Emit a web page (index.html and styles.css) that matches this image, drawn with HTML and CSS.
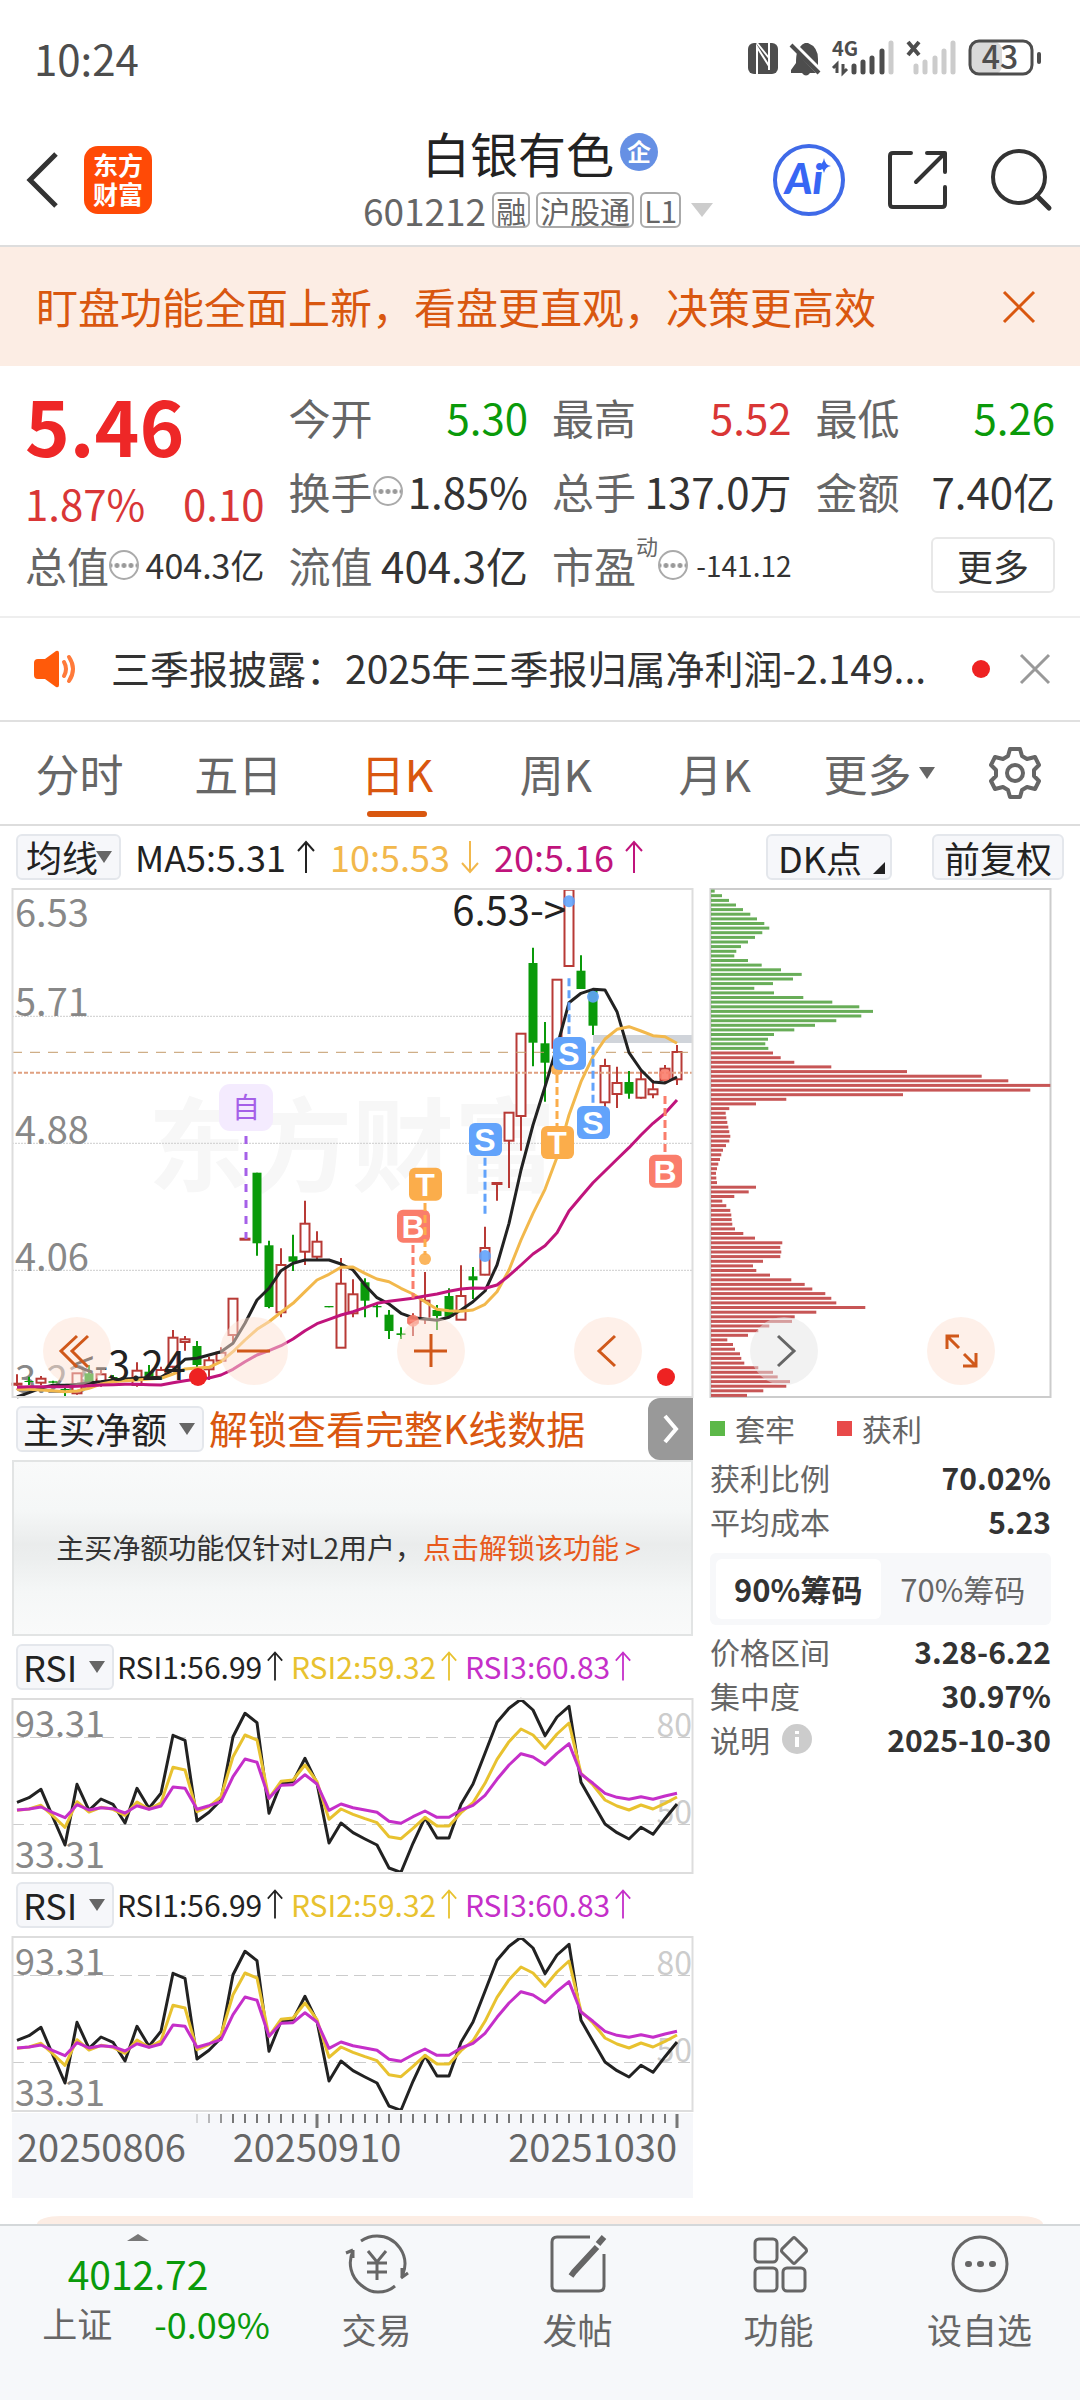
FILE: index.html
```
<!DOCTYPE html>
<html lang="zh-CN">
<head>
    <meta charset="UTF-8">
    <meta name="viewport" content="width=device-width, initial-scale=1.0">
    <title>白银有色 601212</title>
    <link rel="stylesheet" href="styles.css">
</head>
<body>
    <div class="status-bar">
        <span class="time">10:24</span>
        <svg class="status-icons" width="296" height="40" viewBox="0 0 296 40">
            <rect x="0" y="5" width="30" height="31" rx="6" fill="#4d4d4d"/>
            <path d="M9 36V9l12 19M9 5l12 15M21 5v27" fill="none" stroke="#fff" stroke-width="2"/>
            <path d="M52 9q2-3 5-4h3q10 4 10 16v6zM49 15q-1 3-1 10l-5 7v3h25z" fill="#4d4d4d"/>
            <path d="M43 7l28 28" stroke="#4d4d4d" stroke-width="4"/>
            <path d="M54 35h8q-4 5-8 0z" fill="#4d4d4d"/>
            <text x="84" y="18" class="net">4G</text>
            <path d="M89 35V26l-4 4M95 26v9l4-4" fill="none" stroke="#4d4d4d" stroke-width="3"/>
            <path d="M106 34v-6M115 34V24M124 34V20M134 34V13" stroke="#4d4d4d" stroke-width="5" stroke-linecap="round"/>
            <path d="M143 34V5M168 34v-6M177 34V24M187 34V20M196 34V13M205 34V5" stroke="#ccc" stroke-width="5" stroke-linecap="round"/>
            <path d="M160 4l11 13M171 4l-11 13" stroke="#4d4d4d" stroke-width="4"/>
            <rect x="222" y="4" width="32" height="32" rx="8" fill="#d9d9d9"/>
            <rect x="222" y="3" width="62" height="33" rx="9" fill="none" stroke="#4d4d4d" stroke-width="3"/>
            <path d="M291 16v8" stroke="#4d4d4d" stroke-width="4" stroke-linecap="round"/>
            <text x="252" y="31" text-anchor="middle" class="battery">43</text>
        </svg>
    </div>

    <header class="top">
        <div class="top-left">
            <button class="icon-btn" aria-label="返回">
                <svg width="36" height="60" viewBox="0 0 36 60"><path d="M32 4L6 30l26 26" fill="none" stroke="#333" stroke-width="5"/></svg>
            </button>
            <a class="logo" href="#">东方<br>财富</a>
        </div>
        <div class="top-title">
            <h1>白银有色<span class="ent">企</span></h1>
            <p>601212<span class="tag">融</span><span class="tag">沪股通</span><span class="tag">L1</span><i class="tri light"></i></p>
        </div>
        <div class="top-right">
            <button class="icon-btn" aria-label="AI">
                <svg width="74" height="74" viewBox="0 0 74 74">
                    <circle cx="37" cy="37" r="34" fill="#fff" stroke="#3f6ae8" stroke-width="4"/>
                    <text x="13" y="51" class="ai">Ai</text>
                    <path d="M52 15q1 7 7 8-6 1-7 7-1-6-7-7 6-1 7-8z" fill="#3766f4"/>
                </svg>
            </button>
            <button class="icon-btn" aria-label="分享">
                <svg width="62" height="62" viewBox="0 0 62 62"><path d="M24 4H6q-3 0-3 3v48q0 3 3 3h49q3 0 3-3V38M40 4h18v19M57 5L29 33" fill="none" stroke="#333" stroke-width="4" stroke-linecap="round" stroke-linejoin="round"/></svg>
            </button>
            <button class="icon-btn" aria-label="搜索">
                <svg width="62" height="62" viewBox="0 0 62 62"><circle cx="29" cy="28" r="26" fill="none" stroke="#333" stroke-width="4"/><path d="M47 47l12 12" stroke="#333" stroke-width="5" stroke-linecap="round"/></svg>
            </button>
        </div>
    </header>

    <div class="banner">
        <a href="#">盯盘功能全面上新，看盘更直观，决策更高效</a>
        <button class="icon-btn" aria-label="关闭">
            <svg width="36" height="36" viewBox="0 0 36 36"><path d="M3 3l30 30M33 3L3 33" stroke="#d9570f" stroke-width="3"/></svg>
        </button>
    </div>

    <section class="quote">
        <div class="cell tall">
            <strong class="price">5.46</strong>
            <div class="change"><span>1.87%</span><span>0.10</span></div>
        </div>
        <div class="cell"><span>今开</span><b class="down">5.30</b></div>
        <div class="cell"><span>最高</span><b class="up">5.52</b></div>
        <div class="cell"><span>最低</span><b class="down">5.26</b></div>
        <div class="cell"><span>换手<i class="more-dot"></i></span><b>1.85%</b></div>
        <div class="cell"><span>总手</span><b>137.0万</b></div>
        <div class="cell"><span>金额</span><b>7.40亿</b></div>
        <div class="cell"><span>总值<i class="more-dot"></i></span><b class="mid">404.3亿</b></div>
        <div class="cell"><span>流值</span><b>404.3亿</b></div>
        <div class="cell"><span>市盈<sup>动</sup><i class="more-dot"></i></span><b class="small">-141.12</b></div>
        <div class="cell end"><button class="more">更多</button></div>
    </section>

    <div class="news">
        <svg width="48" height="40" viewBox="0 0 48 40">
            <path d="M2 14q0-4 4-4h7L24 2q3-1 3 2v32q0 3-3 2l-11-8H6q-4 0-4-4z" fill="#ff5a0a"/>
            <path d="M32 13q4 7 0 14M37 8q8 12 0 24" fill="none" stroke="#ff7a3a" stroke-width="4" stroke-linecap="round"/>
        </svg>
        <a href="#">三季报披露：2025年三季报归属净利润-2.149...</a>
        <i class="dot"></i>
        <button class="icon-btn" aria-label="关闭">
            <svg width="32" height="32" viewBox="0 0 32 32"><path d="M2 2l28 28M30 2L2 30" stroke="#999" stroke-width="3"/></svg>
        </button>
    </div>

    <nav class="tabs">
        <button>分时</button>
        <button>五日</button>
        <button class="active">日K</button>
        <button>周K</button>
        <button>月K</button>
        <button class="drop">更多<i class="tri small"></i></button>
        <button class="gear" aria-label="设置">
            <svg width="54" height="54" viewBox="0 0 54 54" fill="none" stroke="#666" stroke-width="4" stroke-linejoin="round">
                <path d="M22 3h10l2 7 5 3 8-2 4 8-5 5v6l5 5-4 8-8-2-5 3-2 7H22l-2-7-5-3-8 2-4-8 5-5v-6l-5-5 4-8 8 2 5-3z"/>
                <circle cx="27" cy="27" r="8"/>
            </svg>
        </button>
    </nav>

    <div class="ma-bar">
        <label class="pick tight"><select aria-label="主图指标"><option>均线</option></select></label>
        <span class="val">MA5:5.31<svg class="arrow" viewBox="0 0 20 34"><path d="M10 33V2M2 11l8-9 8 9"/></svg></span>
        <span class="val yellow">10:5.53<svg class="arrow" viewBox="0 0 20 34"><path d="M10 1v31M2 23l8 9 8-9"/></svg></span>
        <span class="val pink">20:5.16<svg class="arrow" viewBox="0 0 20 34"><path d="M10 33V2M2 11l8-9 8 9"/></svg></span>
        <button class="chip dk">DK点</button>
        <button class="chip">前复权</button>
    </div>

    <main class="charts">
        <div class="left">
            <div class="plot">
                <svg id="kline" viewBox="0 0 681 510"></svg>
                <div class="controls">
                    <button aria-label="最左"><svg viewBox="0 0 68 68"><path d="M34 19L18 34l16 16M45 19L29 34l16 16"/></svg></button>
                    <button aria-label="缩小"><svg viewBox="0 0 68 68"><path d="M17 34h33"/></svg></button>
                    <button aria-label="放大"><svg viewBox="0 0 68 68"><path d="M17 34h33M34 17v33"/></svg></button>
                    <button aria-label="左移"><svg viewBox="0 0 68 68"><path d="M41 19L25 34l16 15"/></svg></button>
                </div>
            </div>

            <div class="ind-bar">
                <label class="pick"><select aria-label="副图指标一"><option>主买净额</option></select></label>
                <a class="unlock" href="#">解锁查看完整K线数据</a>
                <button class="next" aria-label="下一个"><svg width="20" height="32" viewBox="0 0 20 32"><path d="M4 3l11 13L4 29" fill="none" stroke="#fff" stroke-width="4"/></svg></button>
            </div>
            <div class="locked">主买净额功能仅针对L2用户，<a href="#">点击解锁该功能 &gt;</a></div>

            <div class="ind-bar">
                <label class="pick"><select aria-label="副图指标二"><option>RSI</option></select></label>
                <span class="rsi">RSI1:56.99<svg class="arrow" viewBox="0 0 20 34"><path d="M10 33V2M2 11l8-9 8 9"/></svg></span>
                <span class="rsi gold">RSI2:59.32<svg class="arrow" viewBox="0 0 20 34"><path d="M10 33V2M2 11l8-9 8 9"/></svg></span>
                <span class="rsi violet">RSI3:60.83<svg class="arrow" viewBox="0 0 20 34"><path d="M10 33V2M2 11l8-9 8 9"/></svg></span>
            </div>
            <svg class="rsi-chart" viewBox="0 0 681 176"></svg>

            <div class="ind-bar">
                <label class="pick"><select aria-label="副图指标三"><option>RSI</option></select></label>
                <span class="rsi">RSI1:56.99<svg class="arrow" viewBox="0 0 20 34"><path d="M10 33V2M2 11l8-9 8 9"/></svg></span>
                <span class="rsi gold">RSI2:59.32<svg class="arrow" viewBox="0 0 20 34"><path d="M10 33V2M2 11l8-9 8 9"/></svg></span>
                <span class="rsi violet">RSI3:60.83<svg class="arrow" viewBox="0 0 20 34"><path d="M10 33V2M2 11l8-9 8 9"/></svg></span>
            </div>
            <svg class="rsi-chart" viewBox="0 0 681 176"></svg>
            <svg id="dates" viewBox="0 0 681 86"></svg>
        </div>

        <aside class="right">
            <div class="plot">
                <svg id="chips" viewBox="0 0 341 510"></svg>
                <div class="controls">
                    <button class="gray" aria-label="右移"><svg viewBox="0 0 68 68"><path d="M28 19l16 15-16 15"/></svg></button>
                    <button aria-label="全屏"><svg viewBox="0 0 68 68"><path d="M32 19H20v13M21 20l11 11M36 49h13V36M48 48L37 37"/></svg></button>
                </div>
            </div>
            <p class="legend"><i class="green"></i>套牢<i class="red"></i>获利</p>
            <dl>
                <div><dt>获利比例</dt><dd>70.02%</dd></div>
                <div><dt>平均成本</dt><dd>5.23</dd></div>
            </dl>
            <div class="toggle">
                <button class="on">90%筹码</button>
                <button>70%筹码</button>
            </div>
            <dl>
                <div><dt>价格区间</dt><dd>3.28-6.22</dd></div>
                <div><dt>集中度</dt><dd>30.97%</dd></div>
                <div><dt>说明<svg class="info" width="30" height="30" viewBox="0 0 30 30"><circle cx="15" cy="15" r="15" fill="#ccc"/><path d="M15 13v10M15 7v3" stroke="#fff" stroke-width="4"/></svg></dt><dd>2025-10-30</dd></div>
            </dl>
        </aside>
    </main>

    <div class="card-top"></div>

    <nav class="bottom">
        <a class="index" href="#">
            <i class="tri up"></i>
            <b>4012.72</b>
            <span class="row"><span>上证</span><em>-0.09%</em></span>
        </a>
        <a href="#">
            <svg width="66" height="60" viewBox="0 0 66 60">
                <path d="M17 7Q24 2 33 2a28 28 0 0 1 26 38M2 19l7-3M9 17a28 28 0 0 0 8 34q8 7 17 7 10 0 17-6M9 16v8M57 44l7-5M58 34v10"/>
                <path d="M24 17l9 11 9-11M33 28v18M23 29h20M23 38h20"/>
            </svg>
            交易
        </a>
        <a href="#">
            <svg width="60" height="60" viewBox="0 0 60 60">
                <path d="M42 3H9Q4 3 4 8v44q0 5 5 5h42q5 0 5-5V20"/>
                <path d="M56 3l-6 7M49 13L26 38l-3 4" stroke-width="6"/>
            </svg>
            发帖
        </a>
        <a href="#">
            <svg width="60" height="60" viewBox="0 0 60 60">
                <rect x="6" y="5" width="22" height="23" rx="4"/>
                <rect x="6" y="34" width="22" height="23" rx="4"/>
                <rect x="34" y="34" width="22" height="23" rx="4"/>
                <path d="M44 4q1-1 2 0l11 11q1 2 0 3L46 29q-1 1-2 0L33 18q-1-1 0-3z"/>
            </svg>
            功能
        </a>
        <a href="#">
            <svg width="60" height="60" viewBox="0 0 60 60">
                <circle cx="30" cy="30" r="27"/>
                <path d="M18 30h1M30 30h1M42 30h1" stroke-width="6" stroke-linecap="round"/>
            </svg>
            设自选
        </a>
    </nav>

    <script src="script.js"></script>
</body>
</html>
```

FILE: styles.css
```
* {
    box-sizing: border-box;
}
body {
    font-family: 'Noto Sans CJK SC', sans-serif;
    background-color: #fff;
    color: #333;
    margin: 0;
    display: flex;
    flex-direction: column;
    min-height: 100vh;
    line-height: 1.2;
}
button, select {
    font: inherit;
    color: inherit;
    background: none;
    border: none;
    padding: 0;
    margin: 0;
    cursor: pointer;
}
a {
    color: inherit;
    text-decoration: none;
}
svg {
    display: block;
    overflow: visible;
}
h1, p, dl, dd {
    margin: 0;
}
i, em {
    font-style: normal;
}
.icon-btn {
    display: flex;
}
.tri {
    display: inline-block;
    border: 11px solid transparent;
    border-top: 14px solid #666;
    border-bottom: 0;
}
.tri.light {
    border-top-color: #ccc;
    margin-left: 10px;
}
.tri.small {
    border-width: 12px 8px 0;
    margin-left: 8px;
}
.tri.up {
    border: 11px solid transparent;
    border-bottom: 7px solid #777;
    border-top: 0;
}

/* status bar */
.status-bar {
    display: flex;
    justify-content: space-between;
    align-items: center;
    height: 116px;
    padding: 0 36px 0 34px;
    color: #4d4d4d;
}
.time {
    font-size: 42px;
}
.net {
    font-size: 20px;
    font-weight: bold;
    fill: #4d4d4d;
}
.battery {
    font-size: 32px;
    font-weight: 500;
    fill: #4d4d4d;
}

/* header */
.top {
    display: grid;
    grid-template-columns: 1fr auto 1fr;
    align-items: center;
    height: 131px;
    padding: 0 28px 2px 24px;
    border-bottom: 2px solid #ddd;
}
.top-left {
    display: flex;
    align-items: center;
    gap: 24px;
}
.logo {
    background-color: #ff4a06;
    color: #fff;
    width: 68px;
    height: 68px;
    border-radius: 14px;
    font-size: 25px;
    line-height: 29px;
    font-weight: bold;
    text-align: center;
    padding-top: 4px;
}
.top-title {
    text-align: center;
}
.top-title h1 {
    display: flex;
    align-items: center;
    justify-content: center;
    font-size: 48px;
    font-weight: normal;
    line-height: 60px;
    padding-left: 4px;
    color: #222;
}
.ent {
    width: 38px;
    height: 38px;
    border-radius: 50%;
    background-color: #6690e4;
    color: #fff;
    font-size: 24px;
    font-weight: bold;
    line-height: 36px;
    margin-left: 6px;
}
.top-title p {
    display: flex;
    align-items: center;
    font-size: 37px;
    line-height: 56px;
    color: #666;
}
.tag {
    border: 2px solid #aaa;
    border-radius: 6px;
    font-size: 30px;
    line-height: 32px;
    padding: 0 2px;
    margin-left: 6px;
}
.ai {
    font-family: Lato, sans-serif;
    font-size: 42px;
    font-weight: 900;
    font-style: italic;
    fill: #3766f4;
}
.top-right {
    display: flex;
    justify-content: flex-end;
    align-items: center;
    gap: 41px;
}

.banner {
    display: flex;
    justify-content: space-between;
    align-items: center;
    height: 119px;
    padding: 0 43px 0 36px;
    background-color: #fcede4;
    color: #d9570f;
    font-size: 42px;
}

/* quote */
.quote {
    display: grid;
    grid-template-columns: repeat(4, 1fr);
    grid-template-rows: 74px 74px 74px;
    column-gap: 24px;
    padding: 14px 25px;
    border-bottom: 2px solid #eee;
}
.cell {
    display: flex;
    justify-content: space-between;
    align-items: center;
    font-size: 42px;
    line-height: 70px;
    white-space: nowrap;
    color: #666;
}
.cell span {
    display: flex;
    align-items: center;
}
.cell b {
    font-weight: normal;
    color: #333;
}
.cell b.mid {
    font-size: 34px;
}
.cell b.small {
    font-size: 28px;
}
.cell b.up {
    color: #d93636;
}
.cell b.down {
    color: #0a9a0a;
}
.cell sup {
    font-size: 22px;
    line-height: 30px;
    align-self: flex-start;
}
.cell.end {
    justify-content: flex-end;
}
.tall {
    grid-row: span 2;
    flex-direction: column;
    justify-content: flex-start;
    align-items: stretch;
}
.price {
    font-size: 76px;
    line-height: 88px;
    color: #ee2727;
}
.change {
    display: flex;
    justify-content: space-between;
    color: #d93636;
}
.more-dot {
    width: 30px;
    height: 30px;
    border: 2px solid #aaa;
    border-radius: 50%;
    background: radial-gradient(circle, #999 2px, transparent 3px) center / 7px 7px repeat-x;
}
.more {
    border: 2px solid #e8e8e8;
    border-radius: 6px;
    width: 124px;
    height: 56px;
    font-size: 36px;
    line-height: 46px;
    color: #333;
}

.news {
    display: flex;
    align-items: center;
    height: 104px;
    padding: 0 29px 0 32px;
    font-size: 39px;
    line-height: 52px;
    border-bottom: 2px solid #e0e0e0;
}
.news a {
    flex: 1;
    margin: 0 0 4px 31px;
    white-space: nowrap;
}
.dot {
    width: 18px;
    height: 18px;
    border-radius: 50%;
    background-color: #ee2222;
    margin-right: 29px;
}

/* period tabs */
.tabs {
    display: flex;
    height: 104px;
    border-bottom: 2px solid #ddd;
    font-size: 44px;
    color: #666;
}
.tabs button {
    flex: 160 0 0;
    display: flex;
    align-items: center;
    justify-content: center;
    position: relative;
}
.tabs .drop {
    padding-left: 6px;
}
.tabs .gear {
    flex: 114 0 0;
    padding-right: 8px;
}
.tabs .active {
    color: #d9570f;
}
.tabs .active::after {
    content: '';
    position: absolute;
    bottom: 7px;
    width: 60px;
    height: 6px;
    border-radius: 3px;
    background-color: #d9570f;
}

/* MA row */
.ma-bar {
    display: flex;
    align-items: center;
    height: 62px;
    padding: 0 16px;
    font-size: 36px;
    color: #222;
}
.pick {
    position: relative;
    display: flex;
    align-items: center;
}
.pick select {
    appearance: none;
    height: 46px;
    padding: 0 34px 2px 5px;
    border: 2px solid #e4e7ec;
    border-radius: 6px;
    background-color: #f6f7fa;
    font-size: 36px;
    line-height: 40px;
    color: #222;
}
.pick::after {
    content: '';
    position: absolute;
    right: 9px;
    border: 8px solid transparent;
    border-top: 12px solid #666;
    border-bottom: 0;
    pointer-events: none;
}
.pick.tight select {
    padding: 0 20px 2px 8px;
}
.val {
    display: flex;
    align-items: center;
    margin-left: 14px;
}
.arrow {
    width: 20px;
    height: 34px;
    margin-left: 10px;
    fill: none;
    stroke: currentColor;
    stroke-width: 2;
}
.yellow {
    color: #f2b84c;
}
.pink {
    color: #c0147c;
}
.chip {
    position: relative;
    height: 46px;
    padding: 0 10px;
    border: 2px solid #e4e7ec;
    border-radius: 6px;
    background-color: #f6f7fa;
    line-height: 38px;
}
.chip.dk {
    margin-left: auto;
    margin-right: 40px;
    padding-right: 28px;
}
.chip.dk::after {
    content: '';
    position: absolute;
    right: 5px;
    bottom: 4px;
    border-left: 12px solid transparent;
    border-bottom: 12px solid #222;
}

/* charts */
.charts {
    display: grid;
    grid-template-columns: 681fr 341fr;
    column-gap: 17px;
    padding: 0 29px 0 12px;
    align-items: start;
}
.plot {
    position: relative;
}
.plot > svg, .rsi-chart, #dates {
    width: 100%;
}
.axis {
    font-size: 38px;
    fill: #888;
}
.rsi-chart .axis {
    font-size: 36px;
}
.rsi-chart .faint {
    font-size: 32px;
    fill: #ccc;
}
#dates .axis {
    fill: #666;
}
.note {
    font-size: 40px;
    fill: #222;
}
.watermark {
    font-size: 102px;
    font-weight: bold;
    fill: #f7f7f7;
}
.badge {
    font-family: 'Liberation Sans', sans-serif;
    font-size: 32px;
    font-weight: bold;
    fill: #fff;
}
.self {
    font-size: 28px;
    fill: #a560e8;
}
.controls {
    position: absolute;
    left: 0;
    bottom: 13px;
    display: flex;
    gap: 109px;
    padding-left: 31px;
}
.right .controls {
    padding-left: 40px;
}
.controls button {
    width: 68px;
    height: 68px;
    border-radius: 50%;
    background-color: rgba(253, 226, 212, 0.5);
    color: #d0581a;
}
.controls .gray {
    background-color: rgba(230, 230, 230, 0.5);
    color: #666;
}
.controls path {
    fill: none;
    stroke: currentColor;
    stroke-width: 3;
}
.ind-bar {
    display: flex;
    align-items: center;
    height: 62px;
    padding-left: 4px;
}
.unlock {
    font-size: 39px;
    line-height: 52px;
    padding-bottom: 4px;
    color: #d9570f;
    margin-left: 5px;
}
.next {
    display: flex;
    align-items: center;
    justify-content: center;
    width: 45px;
    height: 62px;
    margin-left: auto;
    border-radius: 12px 0 0 12px;
    background-color: #999;
}
.locked {
    display: flex;
    align-items: center;
    justify-content: center;
    height: 176px;
    padding-right: 8px;
    border: 2px solid #e2e4e4;
    background: linear-gradient(#f9fafa, #f5f7f7 28%, #eaecec 48%, #eceeee 56%, #f5f7f7 76%, #f9fafa);
    font-size: 28px;
}
.locked a {
    color: #e85a1c;
}
.rsi {
    display: flex;
    align-items: center;
    width: 171px;
    margin-left: 3px;
    padding-bottom: 2px;
    font-size: 30px;
    color: #222;
}
.rsi .arrow {
    width: 18px;
    margin-left: 4px;
}
.gold {
    color: #e8c22f;
}
.violet {
    color: #c52fc9;
}

/* chip distribution */
.legend {
    display: flex;
    align-items: center;
    height: 60px;
    font-size: 30px;
    color: #666;
}
.legend i {
    width: 15px;
    height: 15px;
    margin-right: 10px;
}
.legend .green {
    background-color: #5cb848;
}
.legend .red {
    background-color: #e84a4a;
    margin-left: 42px;
}
.right dl div {
    display: flex;
    justify-content: space-between;
    align-items: center;
    height: 44px;
    font-size: 30px;
    line-height: 40px;
    padding-bottom: 6px;
}
.right dl dt {
    display: flex;
    align-items: center;
    color: #666;
}
.right dl dd {
    font-weight: bold;
}
.info {
    margin-left: 12px;
}
.toggle {
    display: grid;
    grid-template-columns: 1fr 1fr;
    height: 72px;
    margin: 7px 0;
    padding: 6px;
    border-radius: 6px;
    background-color: #f7f8fa;
    font-size: 31px;
    line-height: 54px;
    color: #666;
}
.toggle .on {
    border-radius: 6px;
    background-color: #fff;
    color: #333;
    font-weight: bold;
}

/* bottom */
.card-top {
    height: 8px;
    margin: 18px 37px 0;
    border-radius: 24px 24px 0 0 / 8px 8px 0 0;
    background-color: #fcede4;
}
.bottom {
    flex: 1;
    display: grid;
    grid-template-columns: 276fr 201fr 201fr 201fr 201fr;
    border-top: 2px solid #d4d8da;
    background-color: #f6f8fa;
    font-size: 35px;
    color: #666;
}
.bottom a {
    display: flex;
    flex-direction: column;
    align-items: center;
    gap: 14px;
    padding-top: 8px;
}
.bottom a > svg {
    fill: none;
    stroke: #666;
    stroke-width: 3;
}
.bottom .index {
    gap: 0;
}
.index b {
    font-size: 39px;
    font-weight: normal;
    line-height: 64px;
    color: #0a9a0a;
}
.index .row {
    display: flex;
    gap: 42px;
    padding-left: 36px;
    line-height: 36px;
}
.index em {
    font-size: 36px;
    color: #0a9a0a;
}
```

FILE: script.js
```
const N = 56;
const x = i => 5 + i * 12;
const y = v => Math.round((v / 3 - 8) * 10) / 10;
const line = (pts, f, color) =>
    `<polyline fill="none" stroke="${color}" stroke-width="3" stroke-linejoin="round" points="${pts.map((v, i) => x(i) + ',' + f(v)).join(' ')}"/>`;

// [up/down, body top, body bottom, high, low]
const candles = [
    ['r',1511,1513,1483,1518], ['g',1503,1506,1490,1515], ['r',1496,1508,1488,1516], ['g',1504,1508,1502,1510],
    ['g',1527,1529,1520,1550], ['r',1480,1540,1480,1544], ['g',1480,1506,1455,1510], ['r',1483,1505,1465,1520],
    ['g',1491,1494,1485,1500], ['g',1494,1497,1490,1505], ['r',1472,1515,1447,1520], ['g',1475,1490,1455,1495],
    ['r',1470,1490,1460,1495], ['r',1373,1460,1350,1465], ['r',1378,1386,1368,1412], ['g',1398,1455,1383,1465],
    ['r',1441,1468,1430,1500], ['r',1418,1442,1402,1447], ['r',1256,1365,1256,1385], ['r',1076,1078,1076,1078],
    ['g',878,1090,878,1127], ['g',1096,1281,1082,1285], ['r',1155,1297,1105,1312], ['g',1129,1145,1064,1173],
    ['r',1031,1115,962,1155], ['r',1085,1130,1054,1140], ['g',1278,1282,1278,1282], ['r',1211,1403,1134,1403],
    ['r',1243,1300,1198,1312], ['g',1207,1262,1195,1312], ['g',1278,1282,1270,1312], ['g',1304,1353,1290,1377],
    ['g',1360,1365,1342,1377], ['r',1316,1328,1300,1368], ['r',1262,1318,1176,1332], ['g',1290,1308,1275,1350],
    ['g',1248,1310,1225,1312], ['r',1248,1319,1156,1320], ['g',1189,1201,1161,1257], ['r',1104,1184,1040,1186],
    ['r',909,911,909,962], ['r',698,782,698,924], ['r',461,708,461,812], ['g',249,488,203,559],
    ['g',490,548,426,665], ['r',299,503,299,570], ['r',29,258,29,258], ['g',272,327,226,327],
    ['g',333,437,333,465], ['r',558,667,536,688], ['r',609,642,560,684], ['g',606,641,573,656],
    ['r',598,653,573,656], ['r',628,643,600,655], ['r',566,600,555,610], ['r',516,598,495,615]
];
const ma5 = [1551,1538,1524,1516,1516,1513,1509,1505,1500,1497,1495,1493,1492,1470,1438,1435,1425,1415,1390,1330,1260,1225,1172,1150,1140,1140,1140,1152,1170,1215,1253,1272,1300,1313,1317,1321,1312,1290,1265,1233,1155,1030,870,735,620,500,368,340,328,330,395,518,570,606,609,591];
const ma10 = [1528,1528,1530,1532,1535,1533,1525,1512,1505,1502,1500,1497,1495,1482,1467,1464,1462,1445,1415,1380,1348,1325,1297,1270,1235,1200,1183,1162,1161,1180,1197,1205,1225,1242,1265,1288,1292,1294,1290,1273,1235,1170,1080,1000,928,832,705,605,530,477,448,440,453,467,470,490];
const ma20 = [1522,1520,1520,1520,1520,1519,1517,1515,1514,1513,1513,1514,1515,1508,1502,1497,1494,1485,1468,1445,1425,1412,1397,1377,1352,1331,1318,1305,1295,1283,1270,1264,1259,1255,1248,1242,1234,1227,1224,1225,1215,1187,1155,1122,1097,1058,993,950,908,873,838,803,765,730,700,660];

// [letter, candle, badge level, line from, line to, dot level]
const marks = [
    ['B',33,1037,1095,1255,1322], ['T',34,911,969,1125,1137], ['S',39,777,833,1005,1128],
    ['T',45,786,585,740,568], ['S',46,519,295,462,64], ['S',48,726,500,670,350], ['B',54,872,648,820,585]
];
const markColor = { B: '#fa7d6b', T: '#fbad4b', S: '#62a3fb' };

function drawKline() {
    let s = '<text class="watermark" x="136" y="296">东方财富</text>';
    [409, 790, 1171].forEach(v => {
        s += `<path d="M0 ${y(v)}H681" stroke="#ccc" stroke-dasharray="2 1"/>`;
    });
    s += '<rect x="581" y="147" width="100" height="8" fill="#d0d4da"/>';
    [['6.53',141], ['5.71',408], ['4.88',792], ['4.06',1172], ['3.23',1538]].forEach(([t, v]) => {
        s += `<text class="axis" x="3" y="${y(v)}">${t}</text>`;
    });
    candles.forEach(([c, top, bottom, high, low], i) => {
        const t = y(top), b = y(bottom), h = Math.max(b - t, 1);
        if (c === 'g') {
            s += `<path d="M${x(i)} ${y(high)}V${y(low)}" stroke="#0a9a0a" stroke-width="2"/><rect x="${x(i) - 4.5}" y="${t}" width="9" height="${h}" fill="#0a9a0a"/>`;
        } else {
            s += `<path d="M${x(i)} ${y(high)}V${t}M${x(i)} ${b}V${y(low)}" stroke="#b83a36" stroke-width="2"/><rect x="${x(i) - 4.5}" y="${t}" width="9" height="${h}" fill="#fff" stroke="#b83a36" stroke-width="2"/>`;
        }
    });
    s += `<path d="M0 ${y(517)}H681" stroke="#c49a6a" stroke-dasharray="10 8"/>`;
    s += `<path d="M0 ${y(578)}H681" stroke="#e0a080" stroke-width="2" stroke-dasharray="4 2"/>`;
    s += line(ma5, y, '#222') + line(ma10, y, '#f2b84c') + line(ma20, y, '#c0147c');
    s += '<path d="M234 248V351" stroke="#a560e8" stroke-width="3" stroke-dasharray="8 8"/><rect x="207" y="196" width="54" height="47" rx="11" fill="#f3e9fe" fill-opacity="0.9"/><text class="self" x="234" y="230" text-anchor="middle">自</text>';
    marks.forEach(([t, i, v, from, to, dot]) => {
        const c = markColor[t];
        s += `<path d="M${x(i)} ${y(from)}V${y(to)}" stroke="${c}" stroke-width="3" stroke-dasharray="8 4"/>`;
        s += `<circle cx="${x(i)}" cy="${y(dot)}" r="6" fill="${c}" fill-opacity="0.9"/>`;
        s += `<rect x="${x(i) - 16}" y="${y(v) - 16}" width="33" height="33" rx="6" fill="${c}"/>`;
        s += `<text class="badge" x="${x(i)}" y="${y(v) + 12}" text-anchor="middle">${t}</text>`;
    });
    s += `<text class="note" x="554" y="37" text-anchor="end">6.53-&gt;</text><text class="note" x="60" y="492">&lt;-3.24</text>`;
    s += '<circle cx="186" cy="489" r="9" fill="#ee2222"/><circle cx="654" cy="489" r="9" fill="#ee2222"/>';
    s += '<rect x="0.5" y="1" width="680" height="508" fill="none" stroke="#ddd" stroke-width="2"/>';
    document.getElementById('kline').innerHTML = s;
}

// bar lengths of the cost distribution, top price first
const bars = [11,33,54,75,96,118,138,160,175,154,132,111,90,76,70,111,152,210,272,246,186,130,189,277,364,445,486,451,376,312,250,189,171,163,172,186,209,250,361,588,812,892,1018,958,576,226,135,55,44,46,49,52,55,58,55,45,36,31,27,22,18,15,16,18,135,113,70,34,46,58,61,62,64,72,97,132,214,208,211,208,156,126,136,177,241,281,304,343,361,376,463,316,251,243,175,142,111,49,66,72,87,91,100,142,186,200,237,226,157,108];

function drawChips() {
    let s = '<rect x="0.5" y="1" width="340" height="508" fill="none" stroke="#ccc" stroke-width="2"/>';
    bars.forEach((w, i) => {
        s += `<rect x="1" y="${(1.6 + i * 4.627).toFixed(1)}" width="${(w / 3).toFixed(1)}" height="3" fill="${i < 35 ? '#68ad58' : '#c75656'}"/>`;
    });
    document.getElementById('chips').innerHTML = s;
}

const rsi1 = [487,473,448,532,615,433,511,477,493,549,445,505,460,286,301,543,517,480,290,220,248,520,430,425,355,430,609,549,578,597,615,684,697,610,533,594,594,493,432,340,247,205,178,210,287,231,199,427,490,552,578,597,562,583,536,492];
const rsi2 = [511,507,496,528,562,485,516,502,508,526,486,508,488,382,390,515,500,470,350,285,300,475,424,420,375,425,538,507,523,536,548,590,596,565,532,558,558,518,488,430,358,305,267,285,325,282,249,400,435,480,498,510,495,507,490,471];
const rsi3 = [510,507,501,518,533,494,510,503,506,519,497,508,498,441,445,508,497,485,410,357,367,475,436,434,404,432,511,492,503,510,517,544,550,530,513,532,532,510,496,466,418,375,341,351,374,340,311,402,430,460,472,478,470,478,468,460];

function drawRsi(el) {
    const ry = v => Math.round((v - 174) / 3 * 10) / 10;
    let s = '<path d="M0 39.5H681M0 126.5H681" stroke="#ccc" stroke-width="1" stroke-dasharray="12 6"/>';
    s += '<text class="axis" x="3" y="39">93.31</text><text class="axis" x="3" y="170">33.31</text>';
    s += '<text class="axis faint" x="680" y="39" text-anchor="end">80</text><text class="axis faint" x="680" y="126" text-anchor="end">50</text>';
    s += line(rsi1, ry, '#222') + line(rsi2, ry, '#e8c22f') + line(rsi3, ry, '#c52fc9');
    s += '<rect x="0.5" y="1" width="680" height="174" fill="none" stroke="#ddd" stroke-width="2"/>';
    el.innerHTML = s;
}

function drawDates() {
    let s = '<rect y="1" width="681" height="85" fill="#f6f7fa"/>';
    for (let i = 15; i < N; i++) {
        const major = i === 25 || i === 55;
        s += `<path d="M${x(i)} 2v${major ? 14 : 9}" stroke="#777" stroke-width="${major ? 3 : 2}" stroke-opacity="${Math.min(1, (i - 14) / 4)}"/>`;
    }
    s += '<text class="axis" x="5" y="50">20250806</text><text class="axis" x="305" y="50" text-anchor="middle">20250910</text><text class="axis" x="665" y="50" text-anchor="end">20251030</text>';
    document.getElementById('dates').innerHTML = s;
}

drawKline();
drawChips();
document.querySelectorAll('.rsi-chart').forEach(drawRsi);
drawDates();
```
